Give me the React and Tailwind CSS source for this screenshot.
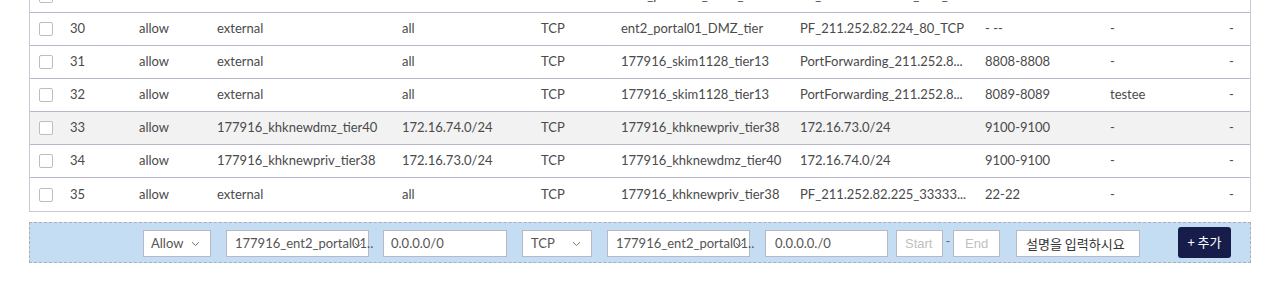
import React from "react";

const rows = [
  { n: "29", a: "allow", s: "external", sip: "all", p: "TCP", d: "ent2_portal01_DMZ_tier", dip: "PF_211.252.82.224_443_TCP", port: "- --", desc: "-" },
  { n: "30", a: "allow", s: "external", sip: "all", p: "TCP", d: "ent2_portal01_DMZ_tier", dip: "PF_211.252.82.224_80_TCP", port: "- --", desc: "-" },
  { n: "31", a: "allow", s: "external", sip: "all", p: "TCP", d: "177916_skim1128_tier13", dip: "PortForwarding_211.252.8...", port: "8808-8808", desc: "-" },
  { n: "32", a: "allow", s: "external", sip: "all", p: "TCP", d: "177916_skim1128_tier13", dip: "PortForwarding_211.252.8...", port: "8089-8089", desc: "testee" },
  { n: "33", a: "allow", s: "177916_khknewdmz_tier40", sip: "172.16.74.0/24", p: "TCP", d: "177916_khknewpriv_tier38", dip: "172.16.73.0/24", port: "9100-9100", desc: "-", hover: true },
  { n: "34", a: "allow", s: "177916_khknewpriv_tier38", sip: "172.16.73.0/24", p: "TCP", d: "177916_khknewdmz_tier40", dip: "172.16.74.0/24", port: "9100-9100", desc: "-" },
  { n: "35", a: "allow", s: "external", sip: "all", p: "TCP", d: "177916_khknewpriv_tier38", dip: "PF_211.252.82.225_33333...", port: "22-22", desc: "-" },
];

function Chevron({ className }) {
  return (
    <svg width="9" height="6" viewBox="0 0 9 6" className={className}>
      <path d="M1 1.2 L4.5 4.5 L8 1.2" fill="none" stroke="#777" strokeWidth="1" />
    </svg>
  );
}

function Row({ r, last }) {
  return (
    <div
      className={`grid grid-cols-[40px_69px_78px_185px_139px_80px_179px_185px_125px_119px_1fr] items-center h-[33px] text-[13px] text-[#4a4a4a] ${last ? "" : "border-b border-[#b9b7c9]"} ${r.hover ? "bg-[#f2f2f2]" : ""}`}
    >
      <div className="pl-[9px] flex items-center">
        <div className="w-[14px] h-[14px] border border-[#bdbdbd] rounded-[2px] bg-white" />
      </div>
      <div>{r.n}</div>
      <div>{r.a}</div>
      <div className="whitespace-nowrap">{r.s}</div>
      <div>{r.sip}</div>
      <div>{r.p}</div>
      <div className="whitespace-nowrap">{r.d}</div>
      <div className="whitespace-nowrap">{r.dip}</div>
      <div>{r.port}</div>
      <div>{r.desc}</div>
      <div>-</div>
    </div>
  );
}

const arial = { fontFamily: "'Liberation Sans', Arial, sans-serif" };
const kr = { fontFamily: "'Noto Sans CJK KR', sans-serif" };

export default function App() {
  return (
    <div className="w-[1280px] h-[306px] bg-white overflow-hidden" style={{ fontFamily: "Lato, 'Noto Sans', sans-serif" }}>
      <div className="ml-[29px] w-[1222px] -mt-[20px] border-l border-r border-b border-[#c9c8d4]">
        {rows.map((r, i) => (
          <Row key={i} r={r} last={i === rows.length - 1} />
        ))}
      </div>
      <div className="ml-[29px] w-[1222px] mt-[10px] h-[41px] bg-[#c5ddf3] border border-dashed border-[#a7b0ba] flex items-center pt-[2px] pl-[113px] text-[13px] text-[#555]">
        <div className="w-[68px] h-[27px] bg-white border border-[#b9b9c6] flex items-center justify-between pl-[7px] pr-[10px]">
          <span>Allow</span>
          <Chevron />
        </div>
        <div className="relative ml-[15px] w-[143px] h-[27px] bg-white border border-[#b9b9c6] flex items-center pl-[8px] whitespace-nowrap">
          <span>177916_ent2_portal01..</span>
          <Chevron className="absolute left-[127px] top-[11px]" />
        </div>
        <div className="ml-[14px] w-[124px] h-[27px] bg-white border border-[#b9b9c6] flex items-center pl-[7px]">0.0.0.0/0</div>
        <div className="ml-[15px] w-[70px] h-[27px] bg-white border border-[#b9b9c6] flex items-center justify-between pl-[8px] pr-[10px]">
          <span>TCP</span>
          <Chevron />
        </div>
        <div className="relative ml-[15px] w-[143px] h-[27px] bg-white border border-[#b9b9c6] flex items-center pl-[8px] whitespace-nowrap">
          <span>177916_ent2_portal01..</span>
          <Chevron className="absolute left-[127px] top-[11px]" />
        </div>
        <div className="ml-[15px] w-[123px] h-[27px] bg-white border border-[#b9b9c6] flex items-center pl-[9px]">0.0.0.0./0</div>
        <div className="ml-[8px] w-[47px] h-[27px] bg-white border border-[#b9b9c6] flex items-center pl-[8px] text-[#c0c0c0]" style={arial}>Start</div>
        <div className="w-[10px] text-center text-[#666] -mt-[6px]" style={arial}>-</div>
        <div className="w-[47px] h-[27px] bg-white border border-[#b9b9c6] flex items-center pl-[11px] text-[#c0c0c0]" style={arial}>End</div>
        <div className="ml-[16px] w-[124px] h-[27px] bg-white border border-[#b9b9c6] flex items-center pl-[9px] text-[13px] text-[#333] whitespace-nowrap" style={kr}>설명을 입력하시요</div>
        <div className="ml-[38px] w-[53px] h-[31px] -mt-[3px] bg-[#161d4b] rounded-[3px] flex items-center justify-center text-white text-[13px]" style={kr}>+ 추가</div>
      </div>
    </div>
  );
}
